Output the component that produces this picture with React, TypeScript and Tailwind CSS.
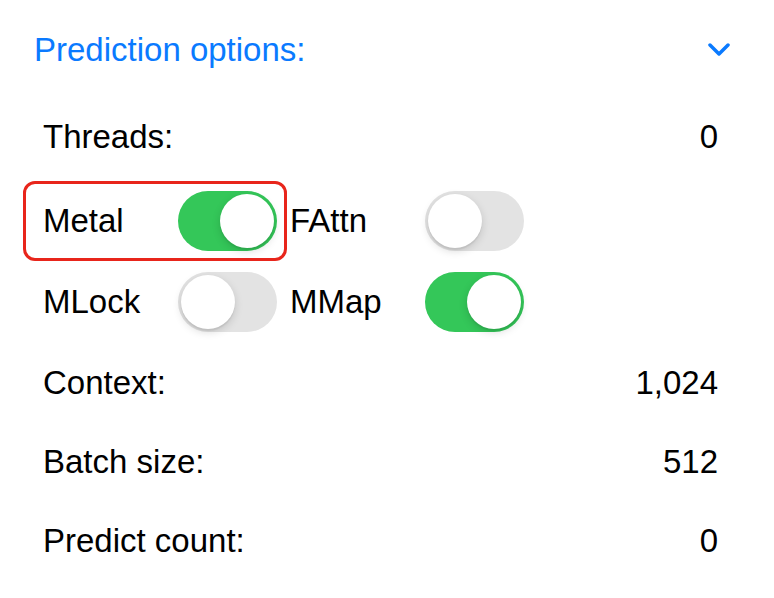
import { useState } from "react";

function Toggle({ on, onChange }: { on: boolean; onChange: () => void }) {
  return (
    <button
      onClick={onChange}
      className={`relative w-[99px] h-[60px] rounded-full shrink-0 transition-colors ${on ? "bg-[#34c759]" : "bg-[#e3e3e3]"}`}
    >
      <span
        className={`absolute top-[3px] w-[54px] h-[54px] rounded-full bg-white shadow-[0_3px_8px_rgba(0,0,0,0.15),0_2px_1px_rgba(0,0,0,0.06)] transition-all ${
          on ? "left-[42px]" : "left-[3px]"
        }`}
      />
    </button>
  );
}

function ValueRow({ label, value, h }: { label: string; value: string; h: string }) {
  return (
    <div className={`flex items-center justify-between pl-[43px] pr-[56px] ${h}`}>
      <span>{label}</span>
      <span>{value}</span>
    </div>
  );
}

export default function App() {
  const [flags, setFlags] = useState({ metal: true, fattn: false, mlock: false, mmap: true });
  const flip = (k: keyof typeof flags) => setFlags((f) => ({ ...f, [k]: !f[k] }));

  return (
    <div className="w-[774px] h-[598px] bg-white text-black text-[33px] font-['Liberation_Sans',Arial,sans-serif] overflow-hidden">
      {/* Header */}
      <div className="flex items-center justify-between h-[100px] pl-[34px] pr-[44px] text-[#0a7aff]">
        <span>Prediction options:</span>
        <svg width="22" height="14" viewBox="0 0 22 14" fill="none">
          <polyline points="2,2 11,11 20,2" stroke="#0a7aff" strokeWidth="3.5" strokeLinecap="round" strokeLinejoin="round" />
        </svg>
      </div>

      <ValueRow label="Threads:" value="0" h="h-[74px]" />

      {/* Toggles */}
      <div className="flex items-center pl-[23px] mt-[7px] h-[80px]">
        <div className="flex items-center w-[264px] h-[80px] border-[3px] border-[#e8251b] rounded-[12px] pl-[17px]">
          <span className="w-[135px]">Metal</span>
          <Toggle on={flags.metal} onChange={() => flip("metal")} />
        </div>
        <div className="flex items-center pl-[3px]">
          <span className="w-[135px]">FAttn</span>
          <Toggle on={flags.fattn} onChange={() => flip("fattn")} />
        </div>
      </div>
      <div className="flex items-center pl-[23px] h-[82px]">
        <div className="flex items-center w-[264px] pl-[20px]">
          <span className="w-[135px]">MLock</span>
          <Toggle on={flags.mlock} onChange={() => flip("mlock")} />
        </div>
        <div className="flex items-center pl-[3px]">
          <span className="w-[135px]">MMap</span>
          <Toggle on={flags.mmap} onChange={() => flip("mmap")} />
        </div>
      </div>

      <ValueRow label="Context:" value="1,024" h="h-[80px]" />
      <ValueRow label="Batch size:" value="512" h="h-[78px]" />
      <ValueRow label="Predict count:" value="0" h="h-[80px]" />
    </div>
  );
}
